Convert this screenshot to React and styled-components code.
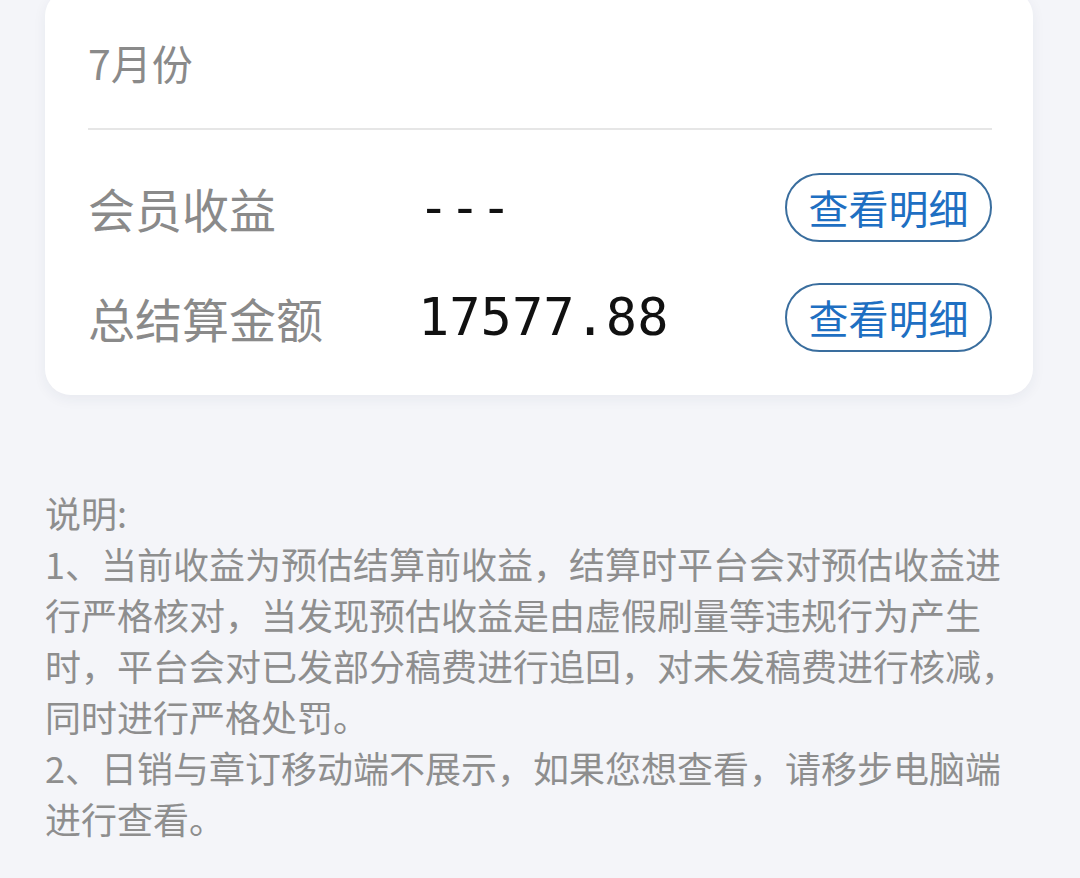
import React from "react";
import styled, { createGlobalStyle } from "styled-components";

const GlobalStyle = createGlobalStyle`
  html, body {
    margin: 0;
    padding: 0;
    background: #f4f5f9;
  }
  body {
    font-family: "Noto Sans CJK SC", "Noto Sans", sans-serif;
  }
`;

const rows = [
  { label: "会员收益", value: "---" },
  { label: "总结算金额", value: "17577.88" },
];

function App() {
  return (
    <>
      <GlobalStyle />
      <Page>
        <Card>
          <CardHeader>7月份</CardHeader>
          <CardBody>
            {rows.map((row) => (
              <Row key={row.label}>
                <Label>{row.label}</Label>
                <Value>{row.value}</Value>
                <DetailButton>查看明细</DetailButton>
              </Row>
            ))}
          </CardBody>
        </Card>
        <Notes>
          <NoteLine>说明:</NoteLine>
          <NoteLine>
            1、当前收益为预估结算前收益，结算时平台会对预估收益进行严格核对，当发现预估收益是由虚假刷量等违规行为产生时，平台会对已发部分稿费进行追回，对未发稿费进行核减，同时进行严格处罚。
          </NoteLine>
          <NoteLine>2、日销与章订移动端不展示，如果您想查看，请移步电脑端进行查看。</NoteLine>
        </Notes>
      </Page>
    </>
  );
}

export default App;

const Page = styled.div`
  width: 1080px;
  height: 878px;
  overflow: hidden;
  padding: 0 47px 0 45px;
  box-sizing: border-box;
`;

const Card = styled.div`
  margin-top: -10px;
  background: #ffffff;
  border-radius: 26px;
  box-shadow: 0 4px 14px rgba(40, 50, 90, 0.06);
  padding: 0 41px 0 43px;
`;

const CardHeader = styled.div`
  box-sizing: border-box;
  height: 140px;
  padding-top: 50px;
  line-height: 44px;
  font-size: 41px;
  color: #8a8a8a;
  border-bottom: 2px solid #e6e6e6;
`;

const CardBody = styled.div`
  padding: 22px 0 23px;
`;

const Row = styled.div`
  display: grid;
  grid-template-columns: 330px 1fr auto;
  align-items: center;
  height: 110px;
`;

const Label = styled.div`
  font-size: 47px;
  color: #8a8a8a;
`;

const Value = styled.div`
  font-family: "DejaVu Sans Mono", "Liberation Mono", monospace;
  font-size: 52px;
  color: #111111;
`;

const DetailButton = styled.button`
  box-sizing: border-box;
  width: 207px;
  height: 69px;
  border: 2px solid #3a6e9e;
  border-radius: 35px;
  background: #ffffff;
  color: #1e6fc2;
  font-family: "Noto Sans CJK SC", sans-serif;
  font-size: 40px;
  padding: 0;
  line-height: 1;
  cursor: pointer;
`;

const Notes = styled.div`
  margin-top: 92px;
  width: 982px;
  font-size: 36px;
  line-height: 51px;
  color: #8e8e8e;
`;

const NoteLine = styled.div``;
